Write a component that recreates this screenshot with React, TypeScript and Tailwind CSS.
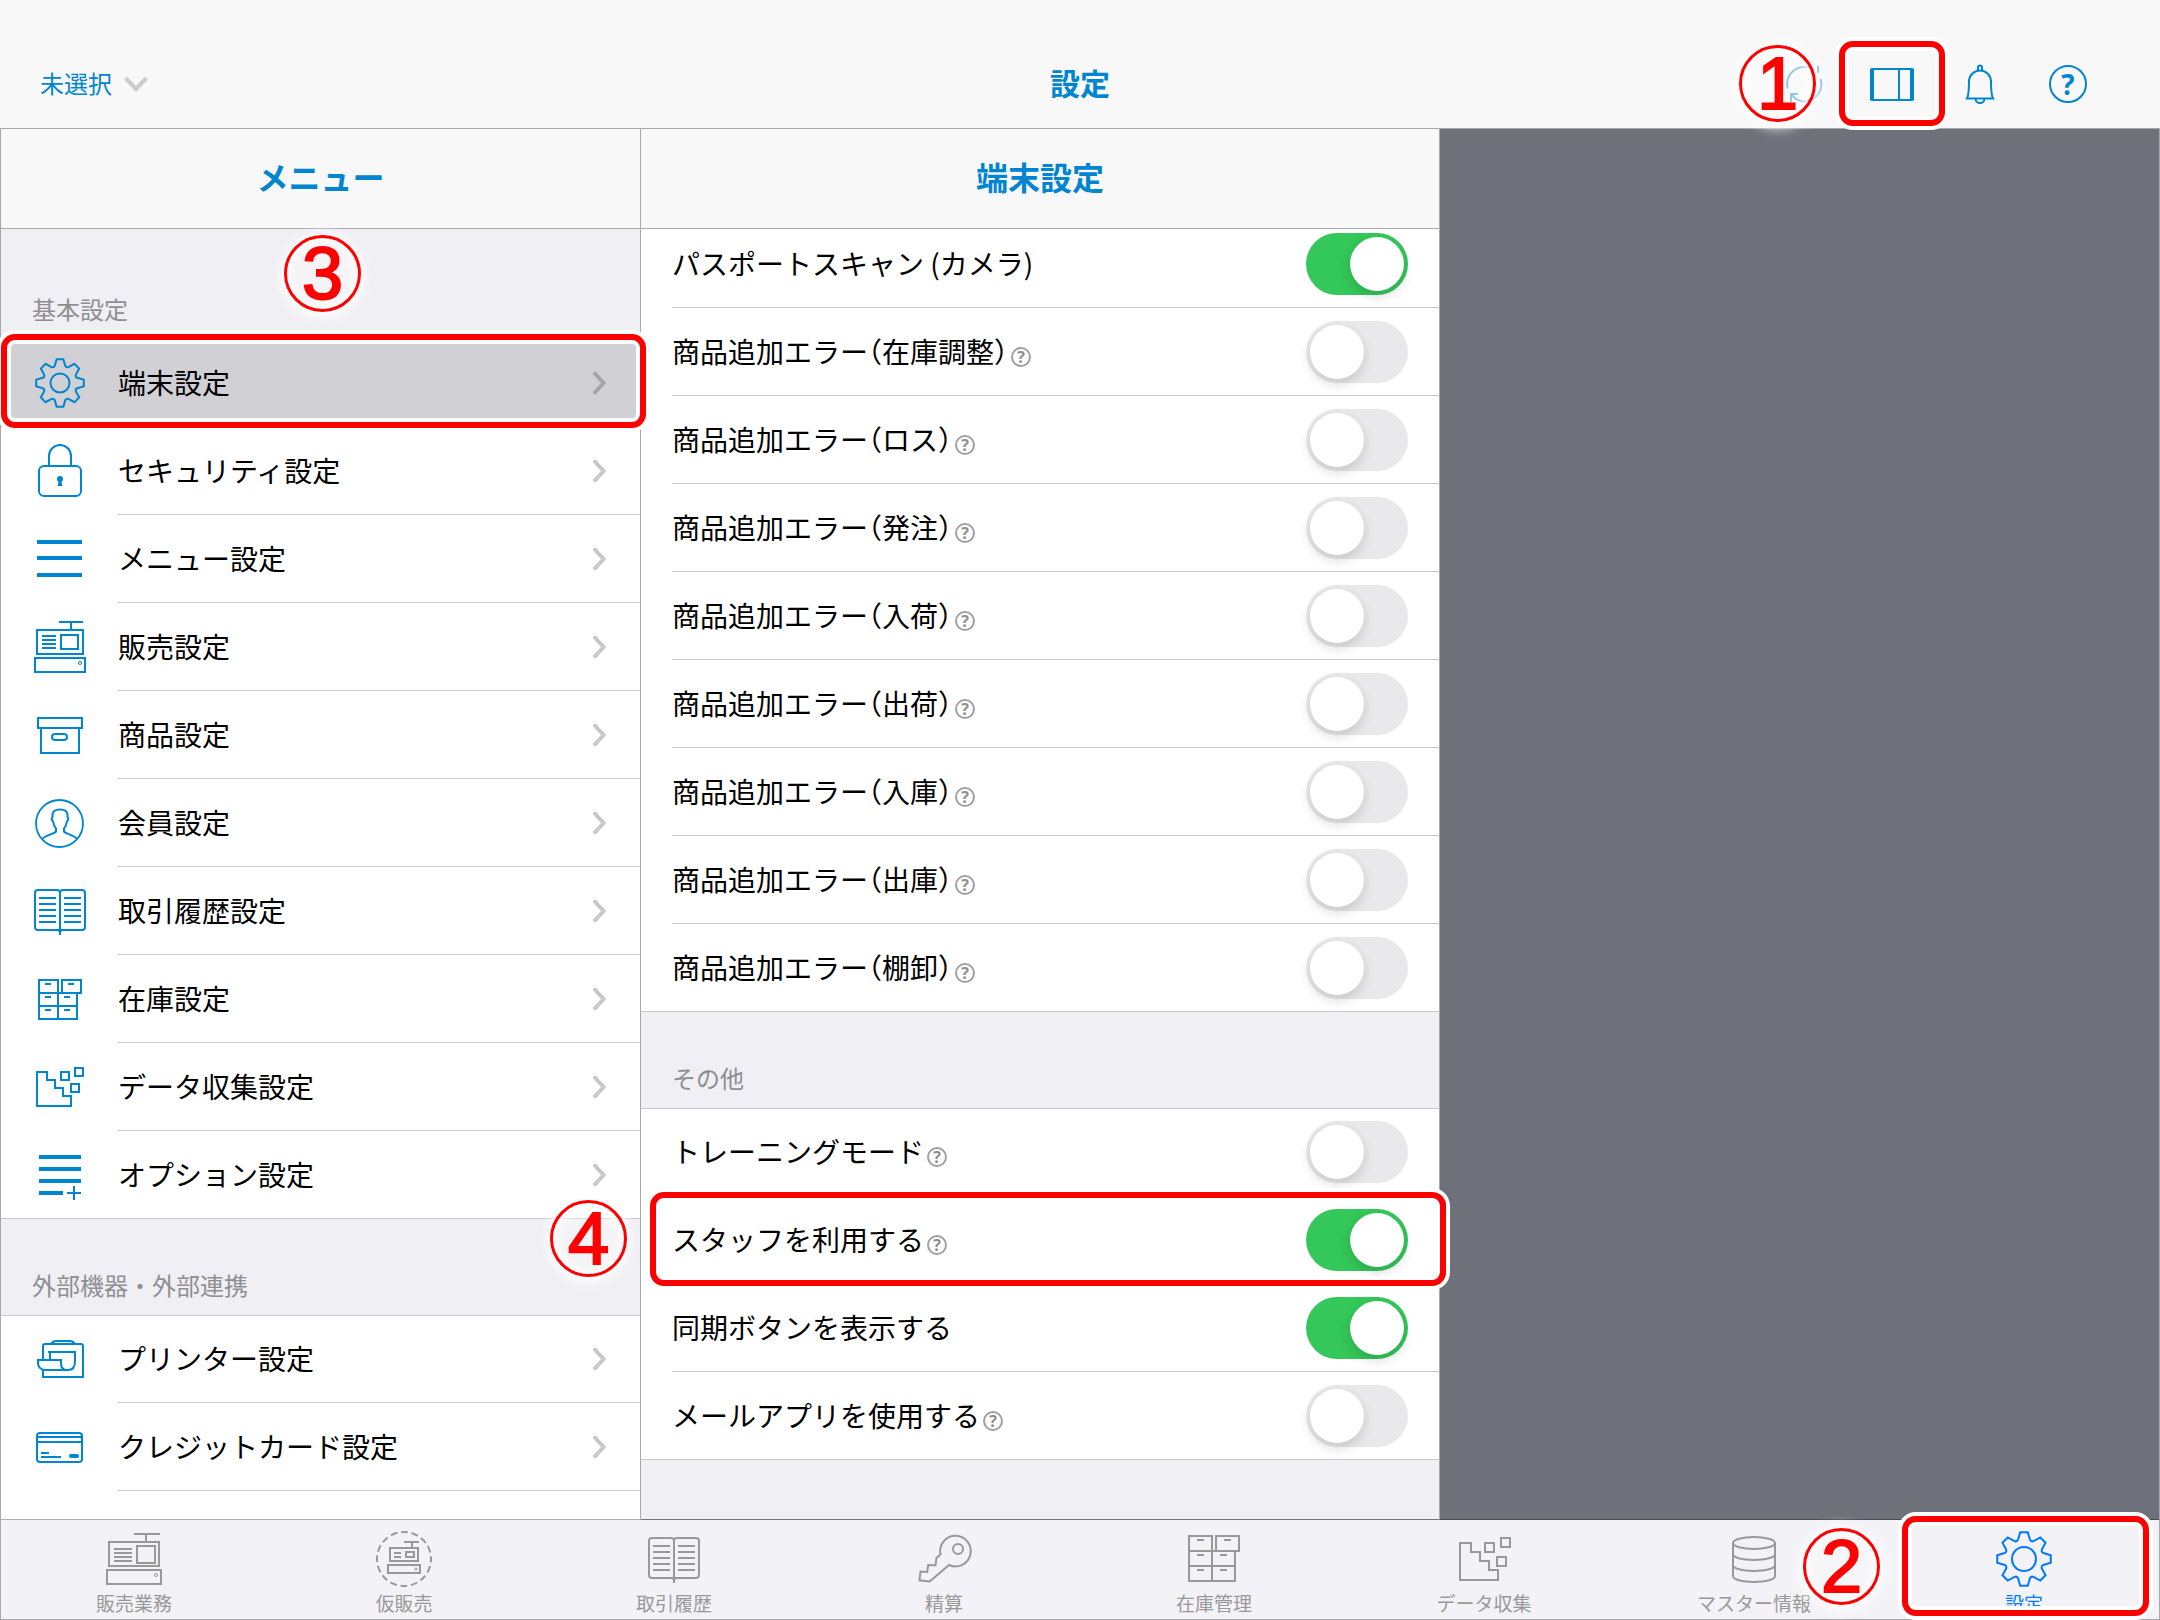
import type { ReactNode } from "react";
import { clsx } from "clsx";

// eight-toothed cog outline centred on (c, c)
const gearPath = (c: number, r: number) => {
  const point = (deg: number, radius: number) => {
    const a = (deg * Math.PI) / 180;
    return `${(c + radius * Math.sin(a)).toFixed(2)} ${(c - radius * Math.cos(a)).toFixed(2)}`;
  };
  let d = "";
  for (let i = 0; i < 8; i++) {
    const t = i * 45;
    d += `${i === 0 ? "M" : "L"}${point(t - 8, r)}L${point(t + 8, r)}`;
    d += `L${point(t + 17, r * 0.75)}Q${point(t + 22.5, r * 0.68)} ${point(t + 28, r * 0.75)}`;
  }
  return d + "Z";
};

const MenuIcon = ({ children }: { children: ReactNode }) => (
  <svg className="mb-px size-14 shrink-0 text-[#0085d1]" viewBox="0 0 56 56" fill="none" stroke="currentColor" strokeWidth="2" aria-hidden="true">
    {children}
  </svg>
);

const TabIcon = ({ children }: { children: ReactNode }) => (
  <svg className="size-[60px]" viewBox="0 0 60 60" fill="none" stroke="currentColor" strokeWidth="2" aria-hidden="true">
    {children}
  </svg>
);

const menuGroups = [
  {
    title: "基本設定",
    first: true,
    items: [
      {
        label: "端末設定",
        selected: true,
        icon: (
          <>
            <path d={gearPath(28, 24)} />
            <circle cx="28" cy="28" r="9.5" />
          </>
        ),
      },
      {
        label: "セキュリティ設定",
        icon: (
          <>
            <rect x="7" y="23" width="42" height="30" rx="5" />
            <path d="M17 23V13a11 11 0 0 1 22 0v10" />
            <circle cx="28" cy="36" r="3" fill="currentColor" stroke="none" />
            <path d="M27 37h2l1.5 6h-5z" fill="currentColor" stroke="none" />
          </>
        ),
      },
      { label: "メニュー設定", icon: <path d="M5 11h45M5 27h45M5 44h45" strokeWidth="4" /> },
      {
        label: "販売設定",
        icon: (
          <>
            <path d="M27 3h24M39 3v8M10 17h14M10 21h14M10 25h14M10 29h14" />
            <rect x="5" y="11" width="46" height="24" />
            <rect x="29" y="16" width="17" height="14" />
            <rect x="3" y="39" width="50" height="14" />
            <circle cx="48" cy="44" r="1.5" strokeWidth="1" />
          </>
        ),
      },
      {
        label: "商品設定",
        icon: (
          <>
            <rect x="6" y="11" width="44" height="10" />
            <path d="M9 21v25h38V21" />
            <rect x="20" y="27" width="15" height="6" rx="3" />
          </>
        ),
      },
      {
        label: "会員設定",
        icon: (
          <>
            <circle cx="27.5" cy="28.5" r="23.5" strokeWidth="1.8" />
            <path d="M10.7 43.7C14 40 23 38.5 24 36.5V33.5C22 31 21.5 29.5 21.3 27C19.5 25 19.5 23 20.5 22C20 16 23 14.5 28 14.5S36 16 35.5 22C36.5 23 36.5 25 34.7 27C34.5 29.5 34 31 32 33.5V36.5C33 38.5 41.5 40 44.8 43.7" />
          </>
        ),
      },
      {
        label: "取引履歴設定",
        icon: (
          <>
            <path d="M28 10a3 3 0 0 0-3-3H6a3 3 0 0 0-3 3v34a3 3 0 0 0 3 3h44a3 3 0 0 0 3-3V10a3 3 0 0 0-3-3H31a3 3 0 0 0-3 3zV52" />
            <path d="M7 15h17M7 21h17M7 27h17M7 33h17M7 39h17M32 15h17M32 21h17M32 27h17M32 33h17M32 39h17" />
            <circle cx="28" cy="47.5" r="1" />
          </>
        ),
      },
      {
        label: "在庫設定",
        icon: (
          <>
            <path d="M7 9h19v39H7zM30 9h19v13H30zM7 22h38v26H26M7 35h38M26 48h19" />
            <path d="M13 13h6M36 13h6M13 26h6M32 26h6M13 39h6M32 39h6" />
          </>
        ),
      },
      {
        label: "データ収集設定",
        icon: (
          <>
            <path d="M5 13H15V21H23V29H31V37H39V47H5Z" />
            <path d="M29 13h8v8h-8zM43 9h8v8h-8zM39 25h8v8h-8z" />
          </>
        ),
      },
      {
        label: "オプション設定",
        icon: (
          <>
            <path d="M7 10h42M7 22h42M7 34h42M7 46h24" strokeWidth="4" />
            <path d="M35 46h14M42 39v14" />
          </>
        ),
      },
    ],
  },
  {
    title: "外部機器・外部連携",
    more: true,
    items: [
      {
        label: "プリンター設定",
        icon: (
          <>
            <path d="M11 28V15a2 2 0 0 1 2-2h36a2 2 0 0 1 2 2v31H11v-7M19 13q2-3 5-3h14q3 0 5 3" />
            <path d="M16 21h28M18 21v8M43 21v9c0 5-2 9-7 9H13c-5 0-7-4-7-7v-3h23v3c0 4 2 7 6 7" />
          </>
        ),
      },
      {
        label: "クレジットカード設定",
        icon: (
          <>
            <rect x="5" y="14" width="45" height="29" rx="3" />
            <path d="M5 18h45M5 23h45M9 34h8M9 38h20" />
            <path d="M39 37h6" strokeWidth="4" strokeLinecap="round" />
          </>
        ),
      },
    ],
  },
];

const scanSettings = [
  { label: "パスポートスキャン (カメラ)", on: true },
  { label: "商品追加エラー（在庫調整）", help: true },
  { label: "商品追加エラー（ロス）", help: true },
  { label: "商品追加エラー（発注）", help: true },
  { label: "商品追加エラー（入荷）", help: true },
  { label: "商品追加エラー（出荷）", help: true },
  { label: "商品追加エラー（入庫）", help: true },
  { label: "商品追加エラー（出庫）", help: true },
  { label: "商品追加エラー（棚卸）", help: true },
];

const otherSettings = [
  { label: "トレーニングモード", help: true },
  { label: "スタッフを利用する", help: true, on: true },
  { label: "同期ボタンを表示する", on: true },
  { label: "メールアプリを使用する", help: true },
];

const tabs = [
  {
    label: "販売業務",
    icon: (
      <>
        <path d="M30 5h26M42 5v8M10 20h18M10 24h18M10 28h18M10 32h18" />
        <rect x="5" y="13" width="50" height="24" />
        <rect x="33" y="17" width="18" height="17" />
        <rect x="3" y="41" width="54" height="14" />
        <circle cx="52" cy="46" r="1.5" strokeWidth="1" />
      </>
    ),
  },
  {
    label: "仮販売",
    icon: (
      <>
        <circle cx="30" cy="30" r="27" strokeDasharray="6.8 3.8" strokeDashoffset="3.4" />
        <path d="M30 13h15M38 13v6M20 24h7M20 28h7" />
        <rect x="16" y="19" width="28" height="13" />
        <rect x="32" y="23" width="8" height="5" />
        <rect x="14" y="36" width="32" height="8" />
        <circle cx="42" cy="40" r="1" strokeWidth="1" />
      </>
    ),
  },
  {
    label: "取引履歴",
    icon: (
      <>
        <path d="M30 12a3 3 0 0 0-3-3H8a3 3 0 0 0-3 3v34a3 3 0 0 0 3 3h44a3 3 0 0 0 3-3V12a3 3 0 0 0-3-3H33a3 3 0 0 0-3 3zV54" />
        <path d="M9 17h17M9 23h17M9 29h17M9 35h17M9 41h17M34 17h17M34 23h17M34 29h17M34 35h17M34 41h17" />
        <circle cx="30" cy="49.5" r="1" />
      </>
    ),
  },
  {
    label: "精算",
    icon: (
      <>
        <path d="M35 36 15.7 52.5 5.5 51.3 6.5 42.5 13.2 43 14.2 36 21.5 36.3 22.4 29 26.5 25.3A15.3 15.3 0 1 1 35 36Z" />
        <circle cx="44" cy="20" r="5" />
      </>
    ),
  },
  {
    label: "在庫管理",
    icon: (
      <>
        <path d="M5 7h23v45H5zM32 7h23v15H32zM5 22h46v30H28M5 37h46" />
        <path d="M13 11h7M40 11h7M13 26h7M36 26h7M13 41h7M36 41h7" />
      </>
    ),
  },
  {
    label: "データ収集",
    icon: (
      <>
        <path d="M6 14H17V23H26V32H35V41H44V51H6Z" />
        <path d="M31 14h9v9h-9zM47 9h9v9h-9zM43 28h9v9h-9z" />
      </>
    ),
  },
  {
    label: "マスター情報",
    icon: (
      <>
        <ellipse cx="30" cy="14" rx="21" ry="6" />
        <path d="M9 14v33c0 3.5 9 6 21 6s21-2.5 21-6V14M9 25c0 3.5 9 6 21 6s21-2.5 21-6M9 36c0 3.5 9 6 21 6s21-2.5 21-6" />
      </>
    ),
  },
  {
    label: "設定",
    active: true,
    icon: (
      <>
        <path d={gearPath(30, 27)} />
        <circle cx="30" cy="30" r="12" />
      </>
    ),
  },
];

// red frame drawn over the control that a step points at
const Frame = ({ className }: { className: string }) => (
  <span
    className={clsx(
      "pointer-events-none absolute z-20 rounded-[14px] border-6 border-[#ff0000] shadow-[0_0_0_4px_#fff,inset_0_0_0_4px_#fff]",
      className
    )}
  />
);

const Step = ({ n, className }: { n: number; className: string }) => (
  <span
    className={clsx(
      "pointer-events-none absolute z-20 flex size-[77px] items-center justify-center rounded-full border-3 border-[#ff0000] bg-white/30 font-['Liberation_Sans',sans-serif] text-[74px] leading-none text-[#ff0000] shadow-[0_2px_12px_4px_rgba(255,255,255,0.9),inset_0_0_10px_4px_rgba(255,255,255,0.8)] [-webkit-text-stroke:2px_#ff0000]",
      className
    )}
  >
    {n}
  </span>
);

const Chevron = ({ dark }: { dark?: boolean }) => (
  <svg className={clsx("h-6 w-3.5 shrink-0", dark ? "text-[#a5a5a9]" : "text-[#c7c7cc]")} viewBox="0 0 14 24" fill="none" stroke="currentColor" strokeWidth="4" aria-hidden="true">
    <path d="M2 1.5 11.5 12 2 22.5" />
  </svg>
);

const ColumnTitle = ({ children }: { children: ReactNode }) => (
  <h2 className="flex h-[100px] shrink-0 items-center justify-center border-b border-[#a9a9ab] bg-[#f8f8f8] pb-1.5 text-[32px] leading-10 font-bold text-[#0085d1]">
    {children}
  </h2>
);

const SectionTitle = ({ first, children }: { first?: boolean; children: ReactNode }) => (
  <h3 className={clsx("flex items-end bg-[#efeff4] pb-3 pl-[31px] text-2xl leading-9 text-[#8e8e93]", first ? "h-[110px]" : "h-24")}>
    {children}
  </h3>
);

type Setting = { label: string; help?: boolean; on?: boolean };

const SettingList = ({ settings, className }: { settings: Setting[]; className?: string }) => (
  <ul className={clsx("border-t border-[#c8c7cc] bg-white", className)}>
    {settings.map((s) => (
      <li key={s.label} className="group h-[88px] border-[#c8c7cc] pl-[31px] first:-mt-px last:border-b">
        <div className="flex h-full items-center justify-between border-b border-[#c8c7cc] pt-px pr-[31px] group-last:border-b-0">
          <div className="flex items-end gap-[3px] pb-0.5">
            <label htmlFor={s.label} className="text-[28px] leading-8 [font-feature-settings:'halt']">
              {s.label}
            </label>
            {s.help && (
              <button
                aria-label={`${s.label}のヘルプ`}
                className="flex size-5 items-center justify-center rounded-full border-2 border-[#a0a0a3] font-['Open_Sans',sans-serif] text-base leading-none font-bold text-[#8e8e93]"
              >
                ?
              </button>
            )}
          </div>
          <input
            id={s.label}
            type="checkbox"
            role="switch"
            defaultChecked={s.on}
            className="h-[62px] w-[102px] shrink-0 appearance-none rounded-full bg-[#e9e9eb] p-1 before:block before:size-[54px] before:rounded-full before:bg-white before:shadow-[0_5px_12px_rgba(0,0,0,0.15)] before:content-[''] checked:bg-[#34c759] checked:before:translate-x-10"
          />
        </div>
      </li>
    ))}
  </ul>
);

const Header = () => (
  <header className="relative z-30 grid grid-cols-3 items-center border-b border-[#a9a9ab] bg-[#f8f8f8] pt-10 text-[#0085d1]">
    <button className="flex items-center gap-3 justify-self-start pl-10 text-2xl leading-8">
      <span className="pb-0.5">未選択</span>
      <svg className="h-4 w-6" viewBox="0 0 24 16" fill="none" stroke="#cccccc" strokeWidth="4" aria-hidden="true">
        <path d="M1.5 2 12 13 22.5 2" />
      </svg>
    </button>
    <h1 className="pb-1 text-center text-[30px] leading-10 font-bold">設定</h1>
    <div className="flex justify-end pr-12">
      <button aria-label="同期" className="relative flex size-[88px] items-center justify-center">
        <svg className="size-11 opacity-60" viewBox="0 0 44 44" fill="none" stroke="currentColor" strokeWidth="2" aria-hidden="true">
          <path d="M5.7 26.5A17 17 0 0 1 27 5.8M36 4v7M38.5 17A17 17 0 0 1 14 37.2L9 32M9 40V32h7" />
        </svg>
        <Step n={1} className="top-[5px] left-[-21px]" />
      </button>
      <button aria-label="レイアウト" className="relative flex size-[88px] items-center justify-center">
        <svg className="h-[33px] w-11" viewBox="0 0 44 33" fill="none" stroke="currentColor" strokeWidth="2" aria-hidden="true">
          <rect x="1" y="1" width="42" height="31" rx="1" />
          <path d="M29 1v31" />
          <path d="M2 1v31M42 1v31" strokeWidth="4" />
        </svg>
        <Frame className="top-px -right-[9px] -left-[9px] h-[85px]" />
      </button>
      <button aria-label="お知らせ" className="flex size-[88px] items-center justify-center">
        <svg className="h-10 w-[30px]" viewBox="0 0 30 40" fill="none" stroke="currentColor" strokeWidth="2" aria-hidden="true">
          <path d="M2 34.5c2-4 2-8 2-17a11 11 0 0 1 22 0c0 9 0 13 2 17z" />
          <path d="M13 6.5V3.5a2 2 0 0 1 4 0v3M10.5 34.5a4.5 4.5 0 0 0 9 0" />
        </svg>
      </button>
      <button aria-label="ヘルプ" className="flex size-[88px] items-center justify-center">
        <span className="flex size-[38px] items-center justify-center rounded-full border-2 border-current font-['Open_Sans',sans-serif] text-[28px] leading-none font-bold">
          ?
        </span>
      </button>
    </div>
  </header>
);

const Menu = () => (
  <section className="relative z-20 flex min-h-0 flex-col border-r border-b border-r-[#a9a9ab] border-b-[#b2b2b2] bg-white">
    <ColumnTitle>メニュー</ColumnTitle>
    <div className="min-h-0 flex-1 overflow-hidden">
      {menuGroups.map((group) => (
        <div key={group.title}>
          <SectionTitle first={group.first}>{group.title}</SectionTitle>
          <ul className="border-t border-[#c8c7cc]">
            {group.items.map((item) => (
              <li key={item.label} className="group h-[88px] border-[#c8c7cc] first:-mt-px last:border-b">
                <a href="#" className={clsx("flex h-full items-center gap-[30px] pt-px pl-[31px]", item.selected && "bg-[#d1d0d5]")}>
                  <MenuIcon>{item.icon}</MenuIcon>
                  <span className="flex flex-1 items-center justify-between self-stretch border-b border-[#c8c7cc] pr-[34px] text-[28px] leading-8 group-last:border-b-0">
                    <span className="pb-0.5">{item.label}</span>
                    <Chevron dark={item.selected} />
                  </span>
                </a>
              </li>
            ))}
            {group.more && <li className="h-8" />}
          </ul>
        </div>
      ))}
    </div>
    <Step n={3} className="top-[106px] left-[283px]" />
    <Frame className="top-[205px] -right-[6px] left-0 h-[94px]" />
    <Step n={4} className="top-[1071px] right-[13px]" />
  </section>
);

const Detail = () => (
  <section className="relative z-10 flex min-h-0 flex-col border-r border-b border-r-[#a9a9ab] border-b-[#76747b] bg-[#efeff4]">
    <ColumnTitle>端末設定</ColumnTitle>
    <div className="min-h-0 flex-1 overflow-hidden">
      <SettingList settings={scanSettings} className="-mt-[9px]" />
      <SectionTitle>その他</SectionTitle>
      <SettingList settings={otherSettings} />
    </div>
    <Frame className="top-[1063px] -right-[7px] left-[9px] h-[94px]" />
  </section>
);

const TabBar = () => (
  <nav className="relative z-30 border-x border-b border-[#a9a9ab] bg-[#f3f2f7]">
    <ul className="-ml-0.5 grid grid-cols-8">
      {tabs.map((tab) => (
        <li key={tab.label} className="relative">
          <a href="#" className={clsx("flex flex-col items-center pt-[9px] pb-0.5 text-[19px] leading-7", tab.active ? "text-[#007aff]" : "text-[#999999]")}>
            <TabIcon>{tab.icon}</TabIcon>
            {tab.label}
          </a>
          {tab.active && (
            <>
              <Step n={2} className="top-2 -left-[86px]" />
              <Frame className="-top-1 right-[10px] left-[13px] h-[100px]" />
            </>
          )}
        </li>
      ))}
    </ul>
  </nav>
);

const App = () => {
  return (
    <div className="flex h-screen flex-col overflow-hidden font-['Noto_Sans_CJK_JP',sans-serif] text-black">
      <Header />
      <main className="grid min-h-0 flex-1 grid-cols-[640fr_799fr_719fr] grid-rows-[minmax(0,1fr)] border-x border-[#a9a9ab]">
        <Menu />
        <Detail />
        <div className="border-b border-[#4c4b52] bg-[#6e7179]" />
      </main>
      <TabBar />
    </div>
  );
};

export default App;
